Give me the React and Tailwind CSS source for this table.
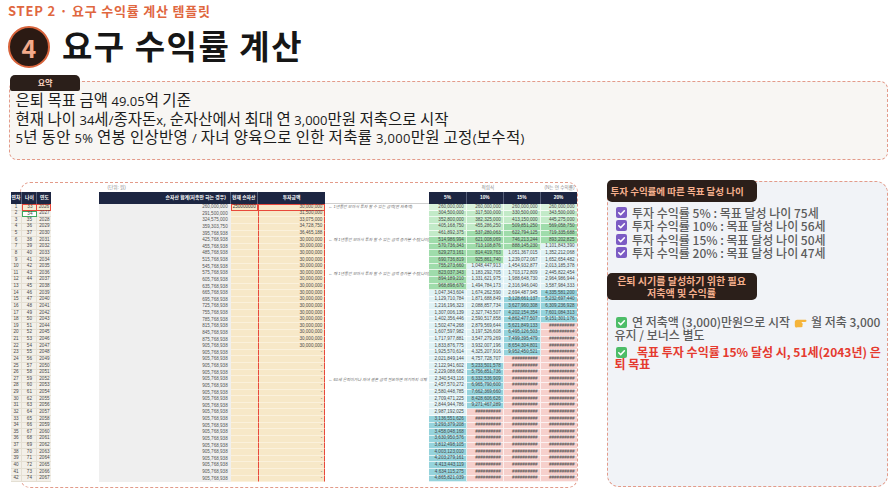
import React from "react";

const RATES = [0.05, 0.1, 0.15, 0.2];
const TEAL_FROM = [3e9, 5e9, 3e9, 4e9];

const buildRows = () => {
  const rows = [];
  let net = 260000000;
  let vals = RATES.map(() => 260000000);
  for (let i = 1; i <= 42; i++) {
    let inv = 0;
    if (i <= 5) inv = 30000000 * Math.pow(1.05, i - 1);
    else if (i <= 22) inv = 30000000;
    if (i > 1) {
      net += inv;
      vals = vals.map((v, k) => v * (1 + RATES[k]) + inv);
    }
    rows.push({ n: i, age: 32 + i, year: 2025 + i, net, inv, vals });
  }
  return rows;
};

const ROWS = buildRows();

const NOTES = {
  1: "← 1년동안 모아서 투자 할 수 있는 금액(연 저축액)",
  6: "← 매 1년동안 모아서 투자 할 수 있는 금액 증가분 수정(나이)",
  11: "← 매 1년동안 모아서 투자 할 수 있는 금액 증가분 수정(나이)",
  27: "← 60세 은퇴이거나 자녀 결혼 금액 필요하면 여기까지 삭제",
};

const fmt = (v) => Math.round(v).toLocaleString("en-US");

const cellBg = (v, k) => {
  if (v >= 1e10) return "#f6d0cc";
  if (v >= TEAL_FROM[k]) return "#95d3dc";
  if (v >= 1e9) return "#e0f2f5";
  if (v >= 5e8) return "#9fdcab";
  if (v >= 3e8) return "#c2eac8";
  return "#d9f2dc";
};

const Check = ({ color }) => (
  <svg width="11" height="11" viewBox="0 0 16 16" className="inline-block shrink-0 align-[-1px]">
    <rect width="16" height="16" rx="3" fill={color} />
    <path
      d="M4 8.3l2.8 2.8L12.2 5.4"
      stroke="white"
      strokeWidth="2.2"
      fill="none"
      strokeLinecap="round"
      strokeLinejoin="round"
    />
  </svg>
);

const Hand = () => (
  <svg width="15" height="13" viewBox="0 0 18 16" className="inline-block align-[-2px] mx-[3px]">
    <path
      d="M2 7.5c0-1.6 1.2-2.8 2.8-2.8h3.4l6.6-.2c1 0 1.6.6 1.6 1.4s-.6 1.4-1.6 1.4H10.5v1.2c.9.1 1.4.7 1.4 1.4 0 .6-.4 1.1-.9 1.3.4.3.6.7.6 1.2 0 .8-.7 1.4-1.5 1.4H5.2C3.4 14.8 2 13.4 2 11.6z"
      fill="#f5b43a"
    />
  </svg>
);

// smaller latin run inside the summary lines
const L = ({ children }) => <span className="text-[13px] font-['Open_Sans',sans-serif]">{children}</span>;

const SheetRow = ({ r }) => (
  <div className="flex h-[6.64px] text-[4.6px] leading-none text-[#4a4a4a]">
    <div className="w-[12px] bg-[#f3f0e9] border-b border-r border-[#e4dfd3] flex items-center justify-center">
      {r.n}
    </div>
    <div
      className={
        r.n === 1
          ? "w-[15px] bg-[#f3ead3] border border-[#e8493b] flex items-center justify-center"
          : r.n === 2
          ? "w-[15px] bg-white border border-[#3fa860] flex items-center justify-center"
          : "w-[15px] bg-[#f3f0e9] border-b border-r border-[#e4dfd3] flex items-center justify-center"
      }
    >
      {r.age}
    </div>
    <div
      className={
        r.n === 1
          ? "w-[14px] bg-[#f3ead3] border border-l-0 border-[#e8493b] flex items-center justify-center"
          : "w-[14px] bg-[#f3f0e9] border-b border-[#e4dfd3] flex items-center justify-center"
      }
    >
      {r.year}
    </div>
    <div className="w-[48px] bg-white" />
    <div className="w-[132px] bg-[#efefef] flex items-center justify-end pr-[3px] text-[#555]">
      {fmt(r.net)}
    </div>
    <div
      className={
        r.n === 1
          ? "w-[27px] bg-[#f7e8c8] border border-[#e8493b] flex items-center pl-[1px] text-[#333]"
          : "w-[27px] bg-[#f7e8c8] border-b border-[#fbf1dc]"
      }
    >
      {r.n === 1 ? "250000000" : ""}
    </div>
    <div
      className={
        r.n === 1
          ? "w-[68px] bg-[#f7e8c8] border border-[#e8493b] flex items-center justify-end pr-[2px]"
          : "w-[68px] bg-[#f7e8c8] border-x border-b border-x-[#e8493b] border-b-[#fbf1dc] flex items-center justify-end pr-[2px]"
      }
    >
      {r.inv > 0 ? fmt(r.inv) : "-"}
    </div>
    <div className="w-[104px] bg-white flex items-center pl-[3px] whitespace-nowrap overflow-hidden italic text-[#6a6a6a] text-[4px]">
      {NOTES[r.n] || ""}
    </div>
    {r.vals.map((v, k) => (
      <div
        key={k}
        className={
          k === 0
            ? "w-[38px] border-b border-r border-white/70 flex items-center justify-end pr-[2px]"
            : k === 3
            ? "w-[36px] border-b border-white/70 flex items-center justify-end pr-[2px]"
            : "w-[37px] border-b border-r border-white/70 flex items-center justify-end pr-[2px]"
        }
        style={{ backgroundColor: cellBg(v, k) }}
      >
        {v >= 1e10 ? "##########" : fmt(v)}
      </div>
    ))}
  </div>
);

const Sheet = () => (
  <div className="-ml-[10.5px] w-[566px] font-['Liberation_Sans','Noto_Sans_CJK_KR',sans-serif]">
    <div className="flex h-[9.5px] items-end pb-[1px] text-[4.6px] leading-none text-[#8a8a8a]">
      <div className="w-[89px]" />
      <div className="w-[132px] pl-[8px]">(단위: 원)</div>
      <div className="w-[199px]" />
      <div className="w-[146px] flex justify-between pl-[51px] pr-[2px]">
        <span>적립식</span>
        <span>(N는 연 수익률)</span>
      </div>
    </div>
    <div className="flex h-[12px] text-[4.8px] leading-none font-bold text-white">
      <div className="w-[12px] bg-[#1d2642] border-r border-[#56607a] flex items-center justify-center">연차</div>
      <div className="w-[15px] bg-[#1d2642] border-r border-[#56607a] flex items-center justify-center">나이</div>
      <div className="w-[14px] bg-[#1d2642] flex items-center justify-center">연도</div>
      <div className="w-[48px]" />
      <div className="w-[132px] bg-[#1d2642] border-r border-[#56607a] flex items-center justify-end pr-[4px]">
        순자산 합계(저축만 하는 경우)
      </div>
      <div className="w-[27px] bg-[#1d2642] border-r border-[#56607a] flex items-center justify-center">현재 순자산</div>
      <div className="w-[68px] bg-[#1d2642] flex items-center justify-center">투자금액</div>
      <div className="w-[104px] border-b border-[#cfcfcf]" />
      <div className="w-[38px] bg-[#1d2642] border-r border-[#56607a] flex items-center justify-center">5%</div>
      <div className="w-[37px] bg-[#1d2642] border-r border-[#56607a] flex items-center justify-center">10%</div>
      <div className="w-[37px] bg-[#1d2642] border-r border-[#56607a] flex items-center justify-center">15%</div>
      <div className="w-[36px] bg-[#1d2642] flex items-center justify-center">20%</div>
    </div>
    {ROWS.map((r) => (
      <SheetRow key={r.n} r={r} />
    ))}
  </div>
);

export default function App() {
  return (
    <div className="w-[896px] h-[488px] bg-white overflow-hidden font-['Noto_Sans_CJK_KR',sans-serif] text-[#1c1c1c]">
      <div className="pl-[8px] pt-[3px] text-[13px] tracking-[0.8px] leading-[16px] font-bold text-[#e0673f]">
        STEP 2 · 요구 수익률 계산 템플릿
      </div>

      <div className="flex items-center pl-[8px] mt-[7px]">
        <div className="w-[42px] h-[42px] rounded-full bg-[#2b1a13] border-[2px] border-[#d8643c] flex items-center justify-center text-[#f4aa8a] text-[25px] font-bold leading-none">
          4
        </div>
        <div className="ml-[12px] -mt-[4px] text-[33px] tracking-[1.5px] font-bold leading-none text-[#161616]">
          요구 수익률 계산
        </div>
      </div>

      <div className="relative ml-[9px] mt-[13px] w-[879px]">
        <div className="absolute left-[1px] -top-[6px] w-[70px] h-[16px] rounded-t-[5px] rounded-b-[2px] bg-[#2b1f1a] text-[#fbd3c0] text-[8px] font-bold flex items-center justify-center">
          요약
        </div>
        <div className="border-[1.5px] border-dashed border-[#e39b8a] rounded-[8px] bg-[#f8f6f3] pl-[5.5px] pt-[9px] pb-[12px] text-[15.5px] leading-[16.5px]">
          <div>
            은퇴 목표 금액 <L>49.05</L>억 기준
          </div>
          <div>
            현재 나이 <L>34</L>세<L>/</L>종자돈<L>x,</L> 순자산에서 최대 연 <L>3,000</L>만원 저축으로 시작
          </div>
          <div className="tracking-[0.3px]">
            <L>5</L>년 동안 <L>5%</L> 연봉 인상반영 <L>/</L> 자녀 양육으로 인한 저축률 <L>3,000</L>만원 고정
            <L>(</L>보수적<L>)</L>
          </div>
        </div>
      </div>

      <div className="flex mt-[22px]">
        <div className="ml-[20px] w-[558px] h-[306px] border-[1.5px] border-dashed border-[#e39b8a] rounded-[10px] bg-white">
          <Sheet />
        </div>

        <div className="ml-[29px] -mt-[1px] w-[281px] h-[306px] rounded-[12px] border-[1.5px] border-dashed border-[#e39b8a] bg-[#f1f3f7]">
          <div className="-mt-[1.5px] -ml-[1.5px] w-[150px] h-[22px] rounded-[5px] bg-[#2b1f1a] text-[#f6b08e] text-[9.5px] font-bold pl-[4px] flex items-center">
            투자 수익률에 따른 목표 달성 나이
          </div>
          <div className="mt-[4px] pl-[8px] text-[12px] leading-[13.3px] font-medium text-[#5b5b5b]">
            <div className="flex items-center gap-[5px]">
              <Check color="#7c5cc4" />
              <span>투자 수익률 5% : 목표 달성 나이 75세</span>
            </div>
            <div className="flex items-center gap-[5px]">
              <Check color="#7c5cc4" />
              <span>투자 수익률 10% : 목표 달성 나이 56세</span>
            </div>
            <div className="flex items-center gap-[5px]">
              <Check color="#7c5cc4" />
              <span>투자 수익률 15% : 목표 달성 나이 50세</span>
            </div>
            <div className="flex items-center gap-[5px]">
              <Check color="#7c5cc4" />
              <span>투자 수익률 20% : 목표 달성 나이 47세</span>
            </div>
          </div>

          <div className="mt-[14px] -ml-[1.5px] w-[150px] h-[27px] rounded-[5px] bg-[#2b1f1a] text-[#f6b08e] text-[10px] leading-[12px] font-bold flex flex-col items-center justify-center">
            <span>은퇴 시기를 달성하기 위한 필요</span>
            <span>저축액 및 수익률</span>
          </div>

          <div className="mt-[16px] pl-[6.5px] text-[12px] leading-[12.5px] font-medium text-[#5b5b5b]">
            <div className="whitespace-nowrap pl-[1.5px]">
              <Check color="#4dbd68" />
              <span className="ml-[5px]">연 저축액 (3,000)만원으로 시작</span>
              <Hand />
              <span>월 저축 3,000</span>
            </div>
            <div>유지 / 보너스 별도</div>
          </div>
          <div className="mt-[4px] pl-[6.5px] text-[12px] leading-[12.5px] font-bold text-[#e53a2f]">
            <div className="whitespace-nowrap pl-[1.5px]">
              <Check color="#4dbd68" />
              <span className="ml-[10px]">목표 투자 수익률 15% 달성 시, 51세(2043년) 은</span>
            </div>
            <div>퇴 목표</div>
          </div>
        </div>
      </div>
    </div>
  );
}
